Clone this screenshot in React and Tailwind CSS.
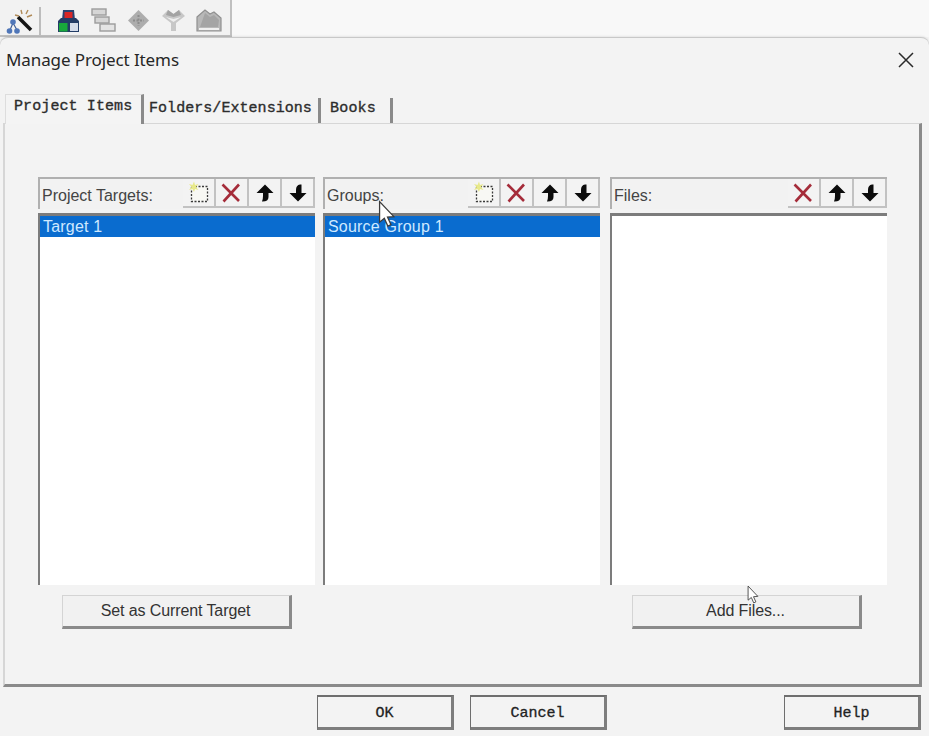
import React from 'react';

const NewIcon = () => (
    <svg width="24" height="24" viewBox="0 0 24 24">
        <rect x="4.5" y="5.5" width="16" height="15" fill="#f8f8f4" stroke="#3a3a3a" strokeWidth="1.3" strokeDasharray="2 1.5" />
        <path d="M7 0.5 L8 4 L11.5 3 L9 6 L11.5 9 L8 8 L7 11 L5.5 8 L2 9 L4.5 6 L2 3 L5.5 4 Z" fill="#e8e98a" />
    </svg>
);

const DeleteIcon = () => (
    <svg width="22" height="22" viewBox="0 0 22 22">
        <path d="M1.5 2.5 L18 19 M18 2.5 L2.5 19.5" stroke="#a52c3a" strokeWidth="2.6" fill="none" />
    </svg>
);

const UpIcon = () => (
    <svg width="20" height="20" viewBox="0 0 20 20">
        <path d="M10 1.5 L18.5 10 L13.5 10 L13.5 14 Q13.5 18.5 7.5 18.5 L7 18.5 Q8 16 8 13 L8 10 L1.5 10 Z" fill="#0c0c0c" />
    </svg>
);

const DownIcon = () => (
    <svg width="20" height="20" viewBox="0 0 20 20">
        <path d="M12 1.5 Q12.8 1.5 13.5 1.5 L13.5 10 L18.5 10 L10 18.5 L1.5 10 L8 10 L8 7 Q8 2 12 1.5 Z" fill="#0c0c0c" />
    </svg>
);

const ToolButton = ({ children }) => (
    <div className="w-[33px] h-[29px] flex items-center justify-center border-r-2 border-b-2 border-[#c2c2c2] bg-[#f3f3f3]">
        {children}
    </div>
);

const ProjectColumn = ({ label, hasNew, selected, buttonLabel, buttonClassName }) => (
    <div className="w-[277px] flex flex-col">
        <div className="h-[32px] flex items-start justify-between border-t-2 border-l-2 border-[#b0b0b0] bg-[#f2f2f2]">
            <span className="pl-[2px] pt-[5px] text-[16px] leading-[24px] text-[#444444] font-['Liberation_Sans',sans-serif]">{label}</span>
            <div className="flex">
                {hasNew && <ToolButton><NewIcon /></ToolButton>}
                <ToolButton><DeleteIcon /></ToolButton>
                <ToolButton><UpIcon /></ToolButton>
                <ToolButton><DownIcon /></ToolButton>
            </div>
        </div>
        <div className="mt-[4px] h-[372px] bg-white border-t-[3px] border-l-2 border-[#7c7c7c]">
            {selected && (
                <div className="h-[21px] bg-[#0a6ccf] pl-[3px] text-[16px] leading-[22px] tracking-[0.2px] text-[#cfe9ff] font-['Liberation_Sans',sans-serif]">
                    {selected}
                </div>
            )}
        </div>
        <div className={`h-[43px] mt-[10px] flex justify-center ${buttonClassName || ''}`}>
            {buttonLabel && (
                <div className="w-[230px] h-[34px] flex items-center justify-center bg-[#f1f1f1] border-t border-l border-[#d4d4d4] border-r-[3px] border-b-[3px] border-r-[#8a8a8a] border-b-[#8a8a8a] text-[16px] tracking-[-0.1px] text-[#333333] font-['Liberation_Sans',sans-serif]">
                    {buttonLabel}
                </div>
            )}
        </div>
    </div>
);

const FooterButton = ({ label, className }) => (
    <div className={`w-[137px] h-[35px] pt-[4px] flex items-center justify-center bg-[#f3f3f3] border-t-2 border-l border-[#6e6e6e] border-r-[3px] border-b-[3px] border-r-[#7d7d7d] border-b-[#7d7d7d] text-[15px] text-[#222222] [-webkit-text-stroke:0.3px_#222222] font-['Liberation_Mono',monospace] ${className || ''}`}>
        {label}
    </div>
);

const Cursor = ({ className, size }) => (
    <svg className={`absolute ${className}`} width={size} height={size * 1.5} viewBox="0 0 12 18">
        <path d="M1 1 L1 14 L4 11.5 L6.2 16.5 L8.2 15.6 L6 10.8 L10 10.5 Z" fill="#ffffff" stroke="#3c3c3c" strokeWidth="0.8" />
    </svg>
);

const Tab = ({ label, active, className }) => (
    <div className={`flex items-start border-r-[3px] border-[#8a8a8a] font-['Liberation_Mono',monospace] text-[15px] leading-[22px] text-[#2c2c2c] [-webkit-text-stroke:0.35px_#2c2c2c] ${active ? 'bg-[#f4f4f4] border-t border-l border-t-[#dddddd] border-l-[#dddddd]' : ''} ${className}`}>
        {label}
    </div>
);

export default function App() {
    return (
        <div className="relative w-[929px] h-[736px] overflow-hidden bg-[#f3f3f3] flex flex-col">
            {/* toolbar */}
            <div className="h-[37px] shrink-0 flex bg-[#f8f8f8]">
                <div className="w-[232px] h-[37px] pt-[7px] flex border-r-2 border-b-2 border-[#c0c0c0] bg-[#f2f2f2]">
                    <div className="w-[41px] h-[28px] flex items-center justify-center border-r-2 border-[#bdbdbd]">
                        <svg width="28" height="28" viewBox="0 0 28 28">
                            <path d="M7 16 L4 23 M7 16 L11 23" stroke="#3f5f96" strokeWidth="1.2" fill="none" />
                            <circle cx="7" cy="15" r="2.8" fill="#4f76b8" />
                            <circle cx="3.5" cy="24" r="2.8" fill="#4f76b8" />
                            <circle cx="11" cy="24" r="2.8" fill="#4f76b8" />
                            <path d="M12 10 L25 23" stroke="#151515" strokeWidth="3.6" />
                            <path d="M15 3 L16 7 M9 8 L13 9 M22 3 L20 7 M26 8 L21 10" stroke="#b08a58" strokeWidth="1.4" />
                        </svg>
                    </div>
                    <div className="flex items-start pl-[15px] pt-[1px] gap-[10px]">
                        <svg width="25" height="25" viewBox="0 0 25 25">
                            <path d="M7 2 L18 2 L19 12 L6 12 Z" fill="#2a4372" />
                            <rect x="8.5" y="4" width="8" height="7" fill="#d92626" />
                            <path d="M5 10 L20 10 L23 13 L23 24 L2 24 L2 13 Z" fill="#233c66" />
                            <rect x="3" y="15" width="8.5" height="8.5" fill="#18a83c" />
                            <rect x="14" y="15" width="8" height="8" fill="#d4dcea" />
                        </svg>
                        <svg width="25" height="25" viewBox="0 0 25 25">
                            <rect x="1" y="1" width="14" height="6" fill="#d6d6d6" stroke="#9c9c9c" strokeWidth="1.4" />
                            <rect x="4" y="9" width="14" height="6" fill="#d6d6d6" stroke="#9c9c9c" strokeWidth="1.4" />
                            <rect x="9" y="16" width="15" height="7" fill="#e4e4e4" stroke="#9c9c9c" strokeWidth="1.4" />
                        </svg>
                        <svg width="25" height="25" viewBox="0 0 25 25">
                            <path d="M12.5 2 L23 12.5 L12.5 23 L2 12.5 Z" fill="#adadad" />
                            <path d="M12.5 7 L12.5 18 M7 12.5 L18 12.5" stroke="#8c8c8c" strokeWidth="2" strokeDasharray="2 1.5" />
                        </svg>
                        <svg width="25" height="25" viewBox="0 0 25 25">
                            <path d="M1 8 L7 2 L12.5 6 L18 2 L24 8 L15 15 L15 23 L10 23 L10 15 Z" fill="#c7c7c7" />
                            <path d="M5 9 L12.5 14 L20 9 L12.5 11 Z" fill="#eeeeee" />
                            <path d="M7 2 L12.5 6 L18 2 L20 7 L12.5 9 L5 7 Z" fill="#a3a3a3" />
                        </svg>
                        <svg width="26" height="25" viewBox="0 0 26 25">
                            <path d="M1 9 L9 2 L14 6 L18 4 L25 10 L25 23 L1 23 Z" fill="#b8b8b8" stroke="#909090" strokeWidth="1.2" />
                            <path d="M4 19 L9 5 L14 9 L18 7 L23 12 L22 19 Z" fill="#a4a4a4" />
                            <path d="M3 21 L23 21" stroke="#efefef" strokeWidth="2" />
                        </svg>
                    </div>
                </div>
            </div>

            {/* dialog */}
            <div className="flex-1 flex flex-col rounded-t-[8px] border-t border-[#c8c8c8] bg-[#f3f3f3] shadow-[0_-1px_2px_rgba(0,0,0,0.08)]">
                <div className="h-[44px] shrink-0 flex items-center justify-between pl-[6px] pr-[14px]">
                    <span className="text-[17px] leading-[24px] tracking-[-0.1px] text-[#262626] font-['Noto_Sans',sans-serif]">Manage Project Items</span>
                    <svg width="18" height="18" viewBox="0 0 18 18">
                        <path d="M2 2 L16 16 M16 2 L2 16" stroke="#2a2a2a" strokeWidth="1.5" />
                    </svg>
                </div>

                {/* tabs */}
                <div className="h-[41px] shrink-0 flex items-end pl-[5px]">
                    <Tab label="Project Items" active className="w-[139px] h-[30px] pl-[8px] pt-[1px] tracking-[0.1px] relative z-10 -mb-[1px]" />
                    <Tab label="Folders/Extensions" className="w-[177px] h-[25px] pl-[5px] tracking-[0.05px]" />
                    <Tab label="Books" className="w-[72px] h-[25px] pl-[9px] tracking-[0.2px]" />
                </div>

                {/* panel */}
                <div className="h-[564px] shrink-0 ml-[3px] mr-[7px] pl-[33px] pt-[53px] bg-[#f3f3f3] border-t border-l-2 border-[#d6d6d6] border-r-[3px] border-b-[3px] border-r-[#8a8a8a] border-b-[#8a8a8a]">
                    <div className="flex">
                        <ProjectColumn label="Project Targets:" hasNew selected="Target 1" buttonLabel="Set as Current Target" />
                        <div className="w-[8px]" />
                        <ProjectColumn label="Groups:" hasNew selected="Source Group 1" />
                        <div className="w-[10px]" />
                        <ProjectColumn label="Files:" buttonLabel="Add Files..." buttonClassName="pr-[4px]" />
                    </div>
                </div>

                {/* footer */}
                <div className="flex-1 flex items-start pt-[8px] pl-[317px]">
                    <FooterButton label="OK" />
                    <FooterButton label="Cancel" className="ml-[16px]" />
                    <FooterButton label="Help" className="ml-[177px]" />
                </div>
            </div>

            <Cursor className="left-[378px] top-[200px]" size={19} />
            <Cursor className="left-[747px] top-[585px]" size={13} />
        </div>
    );
}
